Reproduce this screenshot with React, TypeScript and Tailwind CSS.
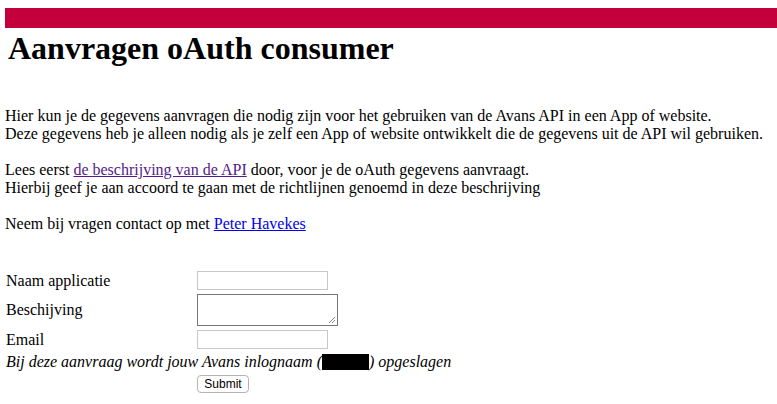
import React from "react";

export default function App() {
  return (
    <div className="w-[777px] h-[404px] bg-white text-black overflow-hidden" style={{ fontFamily: '"Liberation Serif", "Times New Roman", serif' }}>
      <div className="ml-[5px] mt-[8px] h-[20px] bg-[#c4003c]" />
      <h1 className="ml-[8px] mt-[2px] text-[32px] leading-[37px] font-bold">Aanvragen oAuth consumer</h1>
      <div className="ml-[5px] mt-[40px] text-[16px] leading-[18px]">
        <div>Hier kun je de gegevens aanvragen die nodig zijn voor het gebruiken van de Avans API in een App of website.</div>
        <div>Deze gegevens heb je alleen nodig als je zelf een App of website ontwikkelt die de gegevens uit de API wil gebruiken.</div>
        <div className="h-[18px]" />
        <div>
          Lees eerst <a href="#" className="text-[#551a8b] underline">de beschrijving van de API</a> door, voor je de oAuth gegevens aanvraagt.
        </div>
        <div>Hierbij geef je aan accoord te gaan met de richtlijnen genoemd in deze beschrijving</div>
        <div className="h-[18px]" />
        <div>
          Neem bij vragen contact op met <a href="#" className="text-[#0000ee] underline">Peter Havekes</a>
        </div>
      </div>
      <div className="ml-[6px] mt-[37px] flex flex-col gap-[2px] text-[16px] leading-[18px]">
        <div className="flex h-[21px] items-center">
          <div className="w-[191px]">Naam applicatie</div>
          <div className="w-[131px] h-[19px] border border-[#c8c8c8] bg-white" />
        </div>
        <div className="flex h-[34px] items-center">
          <div className="w-[191px]">Beschijving</div>
          <div className="relative w-[141px] h-[32px] border border-[#767676] bg-white">
            <svg className="absolute right-[1px] bottom-[1px]" width="8" height="8" viewBox="0 0 8 8">
              <line x1="1" y1="7" x2="7" y2="1" stroke="#888" strokeWidth="1" />
              <line x1="4" y1="7" x2="7" y2="4" stroke="#888" strokeWidth="1" />
            </svg>
          </div>
        </div>
        <div className="flex h-[21px] items-center">
          <div className="w-[191px]">Email</div>
          <div className="w-[131px] h-[19px] border border-[#c8c8c8] bg-white" />
        </div>
        <div className="flex h-[20px] items-center italic whitespace-nowrap">
          Bij deze aanvraag wordt jouw Avans inlognaam (
          <span className="inline-block w-[47px] h-[16px] bg-black" />
          ) opgeslagen
        </div>
        <div className="flex h-[20px] items-center">
          <div className="w-[191px]" />
          <button
            className="w-[52px] h-[18px] border border-[#b4b4b4] rounded-[4px] bg-white text-[12px] leading-[16px] text-black"
            style={{ fontFamily: '"Liberation Sans", Arial, sans-serif' }}
          >
            Submit
          </button>
        </div>
      </div>
    </div>
  );
}
